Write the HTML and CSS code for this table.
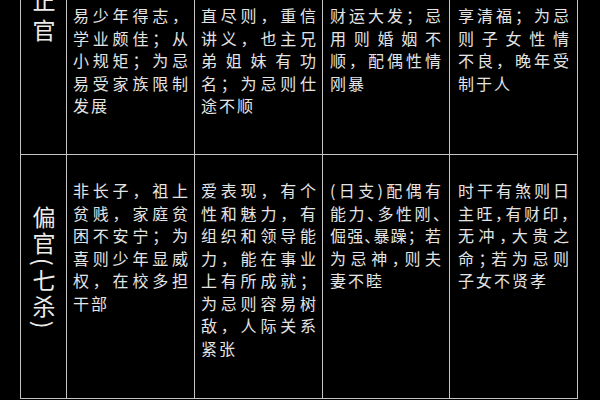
FILE: index.html
```html
<!DOCTYPE html>
<html lang="zh-CN">
<head>
<meta charset="utf-8">
<title>正官 偏官</title>
<link rel="stylesheet" href="styles.css">
</head>
<body>
<table class="grid">
  <colgroup>
    <col class="c0"><col class="c1"><col class="c2"><col class="c3"><col class="c4">
  </colgroup>
  <tr class="r1">
    <td class="head top"><div class="vt wide">正官</div></td>
    <td class="cell p1"><span class="ln">易少年得志，</span><span class="ln">学业颇佳；从</span><span class="ln">小规矩；为忌</span><span class="ln">易受家族限制</span><span class="ln end">发展</span></td>
    <td class="cell p2"><span class="ln">直尽则，重信</span><span class="ln">讲义，也主兄</span><span class="ln">弟姐妹有功</span><span class="ln">名；为忌则仕</span><span class="ln end">途不顺</span></td>
    <td class="cell p3"><span class="ln">财运大发；忌</span><span class="ln">用则婚姻不</span><span class="ln">顺，配偶性情</span><span class="ln end">刚暴</span></td>
    <td class="cell p4"><span class="ln">享清福；为忌</span><span class="ln">则子女性情</span><span class="ln">不良，晚年受</span><span class="ln end">制于人</span></td>
  </tr>
  <tr class="r2">
    <td class="head mid"><div class="vt">偏官(七杀)</div></td>
    <td class="cell p1"><span class="ln">非长子，祖上</span><span class="ln">贫贱，家庭贫</span><span class="ln">困不安宁；为</span><span class="ln">喜则少年显威</span><span class="ln">权，在校多担</span><span class="ln end">干部</span></td>
    <td class="cell p2"><span class="ln">爱表现，有个</span><span class="ln">性和魅力，有</span><span class="ln">组织和领导能</span><span class="ln">力，能在事业</span><span class="ln">上有所成就；</span><span class="ln">为忌则容易树</span><span class="ln">敌，人际关系</span><span class="ln end">紧张</span></td>
    <td class="cell p3"><span class="ln">(日支)配偶有</span><span class="ln">能力<span class="h">、</span>多性刚<span class="h">、</span></span><span class="ln">倔强<span class="h">、</span>暴躁；若</span><span class="ln">为忌神<span class="h">，</span>则夫</span><span class="ln end">妻不睦</span></td>
    <td class="cell p4"><span class="ln">时干有煞则日</span><span class="ln">主旺<span class="h">，</span>有财印<span class="h">，</span></span><span class="ln">无冲<span class="h">，</span>大贵之</span><span class="ln">命<span class="h">；</span>若为忌则</span><span class="ln end">子女不贤孝</span></td>
  </tr>
</table>
</body>
</html>
```
FILE: styles.css
```css
html, body {
  margin: 0;
  padding: 0;
  background: #000;
}
body {
  width: 600px;
  height: 400px;
  overflow: hidden;
  font-family: "Noto Sans CJK SC", sans-serif;
  color: #e4e4e4;
}
.grid {
  margin: -21px 0 0 20px;
  border-collapse: collapse;
  table-layout: fixed;
  width: 558px;
}
.c0 { width: 46px; }
.c1 { width: 128px; }
.c2 { width: 128px; }
.c3 { width: 127px; }
.c4 { width: 128px; }
.grid td {
  border: 1px solid #c4c4c4;
  vertical-align: top;
  padding: 0;
}
.r1 { height: 175px; }
.r2 { height: 244px; }
.cell {
  padding-top: 24px !important;
  font-size: 16px;
  line-height: 22.5px;
}
.p1 { padding-left: 6px !important; padding-right: 6px !important; }
.p2 { padding-left: 6px !important; padding-right: 6px !important; }
.p3 { padding-left: 7px !important; padding-right: 8px !important; }
.p4 { padding-left: 8px !important; padding-right: 8px !important; }
.ln {
  display: block;
  white-space: nowrap;
  text-align: justify;
  text-align-last: justify;
  text-justify: inter-character;
}
.ln.end {
  text-align: left;
  text-align-last: left;
  letter-spacing: 2px;
}
.h {
  font-feature-settings: "halt" 1;
}
.head {
  text-align: center;
}
.head.top {
  vertical-align: top;
  padding-top: 9px;
}
.head.mid {
  vertical-align: middle;
  padding-bottom: 10px;
}
.vt {
  display: inline-block;
  writing-mode: vertical-rl;
  font-size: 23px;
  line-height: 23px;
  letter-spacing: 3px;
  color: #ececec;
}
.vt.wide {
  letter-spacing: 7px;
}
```
